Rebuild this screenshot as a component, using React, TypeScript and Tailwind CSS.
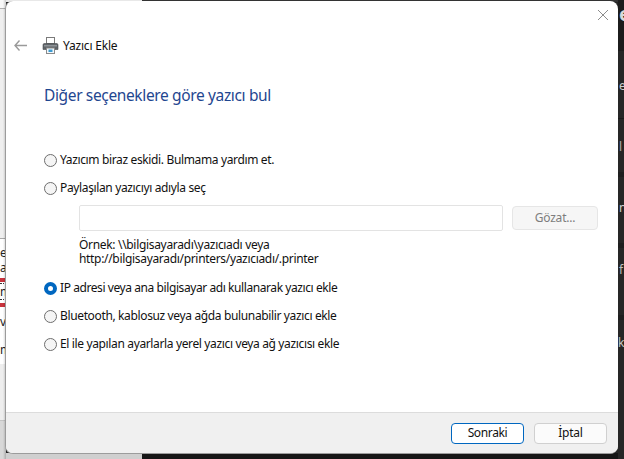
const font = { fontFamily: '"Noto Sans", sans-serif' };

function Radio({ checked = false, label }: { checked?: boolean; label: string }) {
  return (
    <div className="flex items-center h-[14px]">
      {checked ? (
        <span className="w-[13px] h-[13px] rounded-full bg-white border-[4px] border-[#0067c0] shrink-0" />
      ) : (
        <span className="w-[13px] h-[13px] rounded-full bg-[#f5f5f5] border border-[#6e6e6e] shrink-0" />
      )}
      <span className={"ml-[3px] text-[12px] leading-[14px] text-[#111111] whitespace-nowrap " + (checked ? "tracking-[-0.42px]" : "tracking-[-0.36px]")}>{label}</span>
    </div>
  );
}

function PrinterIcon() {
  return (
    <svg width="17" height="17" viewBox="0 0 17 17" className="shrink-0">
      <rect x="4.5" y="0.5" width="8" height="6" fill="#fff" stroke="#7a7a7a" />
      <path d="M2 6.5h13a1.5 1.5 0 0 1 1 1.5v4.5h-3v-1.5h-9v1.5H1V8a1.5 1.5 0 0 1 1-1.5z" fill="#5f6468" stroke="#4a4d50" strokeWidth="0.6" />
      <rect x="2" y="8" width="13" height="1.5" fill="#8d9296" />
      <rect x="4.5" y="11" width="8" height="5.5" fill="#f4f8fb" stroke="#8a8a8a" />
      <rect x="6.5" y="12.5" width="4" height="2.5" fill="#3d9bd1" />
    </svg>
  );
}

// what shows of the window behind, on the left of the dialog
function LeftStrip() {
  return (
    <div className="relative w-[6px] h-full overflow-hidden flex flex-col text-[12px] leading-[14px] text-[#222222]">
      <div className="h-[8px] shrink-0 bg-[#f8f8f8] border-b border-[#b0b0b0] box-content" />
      <div className="h-[229px] shrink-0 bg-[#efefef] border-b border-[#a8a8a8] box-content" />
      <div className="h-[125px] shrink-0 bg-white flex flex-col">
        <span className="mt-[7px]">e</span>
        <span className="mt-[1px]">a</span>
        <div className="mt-[3px] h-[4px] bg-[#c8323c]" />
        <div className="mt-[1px] border-t border-dotted border-[#333333]" />
        <span className="mt-[1px]">m</span>
        <div className="border-t border-dotted border-[#333333]" />
        <div className="mt-[3px] h-[4px] bg-[#c8323c]" />
        <span className="mt-[8px]">v</span>
        <span className="mt-[14px]">m</span>
      </div>
      <div className="h-[56px] shrink-0 bg-[#eeeeee] border-b border-[#c4c4c4] box-content" />
      <div className="flex-1 bg-[#d8d8d8]" />
      <div className="absolute inset-y-0 right-0 w-[3px] bg-gradient-to-r from-transparent to-black/20" />
    </div>
  );
}

// same for the right side, a dark list with its letters cut off by the dialog
function RightStrip() {
  return (
    <div className="w-[6px] h-full overflow-hidden flex flex-col text-[12px] leading-[16px] bg-[#262626]">
      <div className="h-[51px] shrink-0 bg-[#1c1c1c] pt-[2px] pl-[1px] text-[20px] leading-[24px] font-bold text-[#d8d8d8]">e</div>
      <span className="mt-[27px] pl-[1px] text-[#d0d0d0]">e</span>
      <div className="mt-[24px] h-[1px] shrink-0 bg-[#1a1a1a]" />
      <span className="mt-[20px] pl-[1px] text-[#b0b0b0]">l</span>
      <div className="mt-[17px] h-[5px] shrink-0 bg-[#1f1f1f]" />
      <span className="mt-[23px] pl-[1px] text-[#d0d0d0]">n</span>
      <div className="mt-[27px] h-[5px] shrink-0 bg-[#1f1f1f]" />
      <span className="mt-[14px] pl-[1px] text-[#c0c0c0]">f</span>
      <div className="mt-[37px] h-[5px] shrink-0 bg-[#1f1f1f]" />
      <span className="mt-[15px] text-[#c8c8c8]">k</span>
    </div>
  );
}

export default function App() {
  return (
    <div className="relative w-[624px] h-[459px] overflow-hidden bg-[#262626]" style={font}>
      {/* desktop behind the dialog */}
      <div className="w-full h-full flex">
        <LeftStrip />
        <div className="flex-1 flex flex-col">
          <div className="h-[2px] flex">
            <div className="w-[136px] bg-[#e8e8e8]" />
            <div className="flex-1 bg-[#333333]" />
          </div>
          <div className="flex-1" />
          <div className="h-[6px] flex">
            <div className="w-[136px] bg-[#cfcfcf]" />
            <div className="flex-1 bg-[#161616]" />
          </div>
        </div>
        <RightStrip />
      </div>

      {/* dialog window */}
      <div className="absolute left-[5px] top-[1px] w-[613px] h-[453px] flex flex-col overflow-hidden rounded-[8px] border-l border-b border-[#9c9c9c] bg-white">
        <div className="relative flex-1 min-h-0">
          <svg width="10" height="10" viewBox="0 0 10 10" className="absolute left-[592px] top-[9px]">
            <path d="M0 0L10 10M10 0L0 10" stroke="#8c8c8c" strokeWidth="1" fill="none" />
          </svg>

          <div className="flex items-center h-[17px] mt-[36px] ml-[8px]">
            <svg width="13" height="11" viewBox="0 0 13 11" className="shrink-0">
              <path d="M5.5 0.5L1 5.5L5.5 10.5M1 5.5H13" stroke="#9a9a9a" strokeWidth="1.4" fill="none" />
            </svg>
            <span className="ml-[15px]"><PrinterIcon /></span>
            <span className="ml-[4px] text-[12px] leading-[16px] text-[#111111] tracking-[-0.2px]">Yazıcı Ekle</span>
          </div>

          <h1 className="ml-[38px] mt-[30px] text-[15.5px] leading-[22px] font-normal text-[#1f4690] tracking-[-0.36px]">Diğer seçeneklere göre yazıcı bul</h1>

          <div className="ml-[38px] mt-[47px] flex flex-col">
            <Radio label="Yazıcım biraz eskidi. Bulmama yardım et." />
            <div className="mt-[14px]"><Radio label="Paylaşılan yazıcıyı adıyla seç" /></div>

            <div className="ml-[35px] mt-[10px] flex items-center">
              <div className="w-[424px] h-[26px] bg-white border border-[#e3e3e3] rounded-[2px]" />
              <div className="ml-[9px] w-[86px] h-[24px] flex items-center justify-center rounded-[4px] border border-[#e6e6e6] bg-[#f6f6f6] text-[12px] text-[#7d7d7d] tracking-[-0.23px]">Gözat...</div>
            </div>
            <p className="ml-[35px] mt-[7px] text-[12px] leading-[14px] text-[#111111] tracking-[-0.32px]">
              Örnek: \\bilgisayaradı\yazıcıadı veya
              <br />
              http://bilgisayaradı/printers/yazıcıadı/.printer
            </p>

            <div className="mt-[15px]"><Radio checked label="IP adresi veya ana bilgisayar adı kullanarak yazıcı ekle" /></div>
            <div className="mt-[14px]"><Radio label="Bluetooth, kablosuz veya ağda bulunabilir yazıcı ekle" /></div>
            <div className="mt-[14px]"><Radio label="El ile yapılan ayarlarla yerel yazıcı veya ağ yazıcısı ekle" /></div>
          </div>
        </div>

        <div className="h-[41px] shrink-0 bg-[#f0f0f0] border-t border-[#dcdcdc] flex items-center justify-end gap-[10px] pr-[11px]">
          <button className="w-[73px] h-[21px] rounded-[4px] border border-[#0067c0] bg-white text-[12px] leading-[16px] text-[#111111] tracking-[-0.36px]">Sonraki</button>
          <button className="w-[73px] h-[21px] rounded-[4px] border border-[#d0d0d0] bg-[#fbfbfb] text-[12px] leading-[16px] text-[#111111] tracking-[-0.23px]">İptal</button>
        </div>
      </div>
    </div>
  );
}
